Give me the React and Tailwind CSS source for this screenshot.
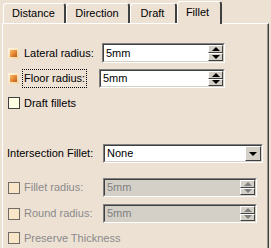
import React from "react";

const font = { fontFamily: '"Liberation Sans", Arial, sans-serif' };

function Tab({ label, width, selected }) {
  return (
    <div
      className={`flex items-center justify-center rounded-t-[3px] border-l border-t border-l-white border-t-white border-r-2 border-r-[#404040] bg-[#ede1d4] text-[11px] text-black ${
        selected ? "relative z-10 -mb-px h-[23px]" : "h-[20px]"
      }`}
      style={{ width }}
    >
      <span className={selected ? "-mt-[1px] pr-[3px]" : "pr-[1px]"}>{label}</span>
    </div>
  );
}

function Checked() {
  return (
    <div className="w-[11px] h-[11px] bg-gradient-to-br from-[#fff6e0] to-[#f3d4a4] p-[2px] shrink-0">
      <div className="w-full h-full bg-gradient-to-br from-[#f9b866] via-[#e98a36] to-[#b9581a]" />
    </div>
  );
}

function Unchecked({ disabled }) {
  return (
    <div
      className={`w-[12px] h-[12px] border shrink-0 ${
        disabled ? "border-[#6e6a64] bg-[#f9e5c8]" : "border-[#404040] bg-[#fffde4]"
      }`}
    />
  );
}

function Sunken({ width, disabled, children }) {
  return (
    <div
      className="h-full border border-t-[#808080] border-l-[#808080] border-b-white border-r-white"
      style={{ width }}
    >
      <div
        className={`h-full border border-t-[#404040] border-l-[#404040] border-b-[#d4d0c8] border-r-[#d4d0c8] flex items-stretch ${
          disabled ? "bg-[#d4d0c8] text-[#808080]" : "bg-white text-black"
        }`}
      >
        {children}
      </div>
    </div>
  );
}

function Arrow({ down, disabled }) {
  const color = disabled ? "border-b-[#808080] border-t-[#808080]" : "border-b-black border-t-black";
  return (
    <div
      className={`w-0 h-0 border-l-[4px] border-r-[4px] border-l-transparent border-r-transparent ${
        down ? "border-t-[4px]" : "border-b-[4px]"
      } ${color}`}
    />
  );
}

function RaisedBtn({ children, className = "" }) {
  return (
    <div className={`bg-[#d4d0c8] border border-t-white border-l-white border-r-[#404040] border-b-[#404040] flex items-center justify-center ${className}`}>
      {children}
    </div>
  );
}

function Spinner({ disabled }) {
  return (
    <div className="flex flex-col w-[15px] shrink-0">
      <RaisedBtn className="flex-1">
        <Arrow disabled={disabled} />
      </RaisedBtn>
      <RaisedBtn className="flex-1">
        <Arrow down disabled={disabled} />
      </RaisedBtn>
    </div>
  );
}

function SpinInput({ width, disabled }) {
  return (
    <Sunken width={width} disabled={disabled}>
      <div className="flex-1 flex items-center pl-[2px] text-[11px]">5mm</div>
      <Spinner disabled={disabled} />
    </Sunken>
  );
}

export default function App() {
  return (
    <div className="w-[271px] h-[248px] bg-[#ede1d4] overflow-hidden text-[11px] text-black" style={font}>
      {/* Tab strip */}
      <div className="flex items-end h-[23px] pl-[3px]">
        <Tab label="Distance" width={63} />
        <Tab label="Direction" width={64} />
        <Tab label="Draft" width={47} />
        <Tab label="Fillet" width={45} selected />
      </div>

      {/* Panel */}
      <div className="ml-[2px] w-[267px] h-[225px] border-l border-t border-l-white border-t-white border-r border-r-[#404040] shadow-[inset_-1px_0_0_#9a9288] flex flex-col">
        {/* Lateral radius */}
        <div className="flex items-center h-[20px] mt-[19px]">
          <div className="w-[99px] flex items-center pl-[5px] gap-[5px]">
            <Checked />
            <span>Lateral radius:</span>
          </div>
          <SpinInput width={123} />
        </div>

        {/* Floor radius */}
        <div className="flex items-center h-[19px] mt-[6px]">
          <div className="w-[96px] h-full flex items-center pl-[5px] gap-[3px]">
            <Checked />
            <span className="h-full flex items-center border border-dotted border-black px-[1px]">Floor radius:</span>
          </div>
          <SpinInput width={126} />
        </div>

        {/* Draft fillets */}
        <div className="flex items-center h-[14px] mt-[8px] pl-[5px] gap-[4px]">
          <Unchecked />
          <span>Draft fillets</span>
        </div>

        {/* Intersection fillet */}
        <div className="flex items-center h-[19px] mt-[34px]">
          <div className="w-[100px] pl-[4px]">Intersection Fillet:</div>
          <Sunken width={160}>
            <div className="flex-1 flex items-center pl-[2px]">None</div>
            <RaisedBtn className="w-[16px]">
              <Arrow down />
            </RaisedBtn>
          </Sunken>
        </div>

        {/* Fillet radius */}
        <div className="flex items-center h-[19px] mt-[15px]">
          <div className="w-[100px] flex items-center pl-[5px] gap-[4px] text-[#8a8a8a]">
            <Unchecked disabled />
            <span>Fillet radius:</span>
          </div>
          <SpinInput width={154} disabled />
        </div>

        {/* Round radius */}
        <div className="flex items-center h-[19px] mt-[7px]">
          <div className="w-[100px] flex items-center pl-[5px] gap-[4px] text-[#8a8a8a]">
            <Unchecked disabled />
            <span>Round radius:</span>
          </div>
          <SpinInput width={154} disabled />
        </div>

        {/* Preserve thickness */}
        <div className="flex items-center h-[14px] mt-[8px] pl-[5px] gap-[4px] text-[#8a8a8a]">
          <Unchecked disabled />
          <span>Preserve Thickness</span>
        </div>
      </div>
    </div>
  );
}
